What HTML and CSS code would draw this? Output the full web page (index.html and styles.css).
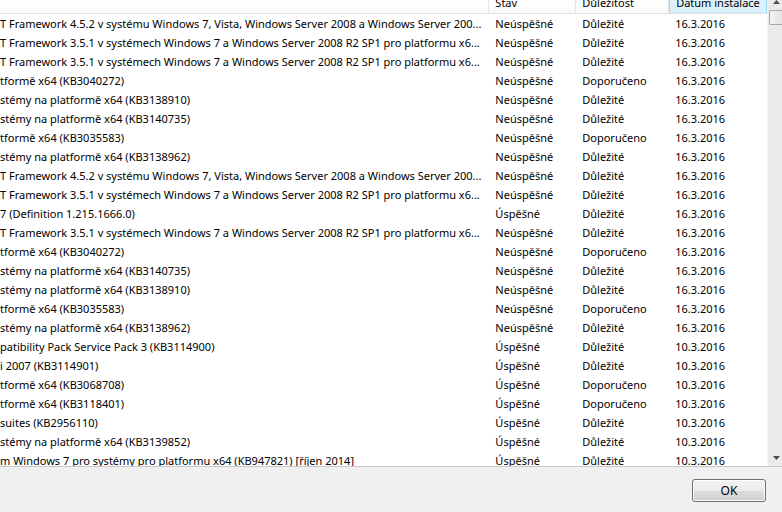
FILE: index.html
```html
<!DOCTYPE html>
<html lang="cs">
<head>
    <meta charset="UTF-8">
    <title>Historie aktualizací</title>
    <link rel="stylesheet" href="styles.css">
</head>
<body>
    <div class="list">
        <div class="view">
            <div class="head">
                <div class="col c-name"></div>
                <div class="col c-stav">Stav</div>
                <div class="col c-dul">Důležitost</div>
                <div class="col c-date sorted">Datum instalace</div>
            </div>
            <div class="rows">
                <div class="row"><span class="c-name">T Framework 4.5.2 v systému Windows 7, Vista, Windows Server 2008 a Windows Server 200...</span><span class="c-stav">Neúspěšné</span><span class="c-dul">Důležité</span><span class="c-date">16.3.2016</span></div>
                <div class="row"><span class="c-name">T Framework 3.5.1 v systémech Windows 7 a Windows Server 2008 R2 SP1 pro platformu x6...</span><span class="c-stav">Neúspěšné</span><span class="c-dul">Důležité</span><span class="c-date">16.3.2016</span></div>
                <div class="row"><span class="c-name">T Framework 3.5.1 v systémech Windows 7 a Windows Server 2008 R2 SP1 pro platformu x6...</span><span class="c-stav">Neúspěšné</span><span class="c-dul">Důležité</span><span class="c-date">16.3.2016</span></div>
                <div class="row"><span class="c-name">tformě x64 (KB3040272)</span><span class="c-stav">Neúspěšné</span><span class="c-dul">Doporučeno</span><span class="c-date">16.3.2016</span></div>
                <div class="row"><span class="c-name">stémy na platformě x64 (KB3138910)</span><span class="c-stav">Neúspěšné</span><span class="c-dul">Důležité</span><span class="c-date">16.3.2016</span></div>
                <div class="row"><span class="c-name">stémy na platformě x64 (KB3140735)</span><span class="c-stav">Neúspěšné</span><span class="c-dul">Důležité</span><span class="c-date">16.3.2016</span></div>
                <div class="row"><span class="c-name">tformě x64 (KB3035583)</span><span class="c-stav">Neúspěšné</span><span class="c-dul">Doporučeno</span><span class="c-date">16.3.2016</span></div>
                <div class="row"><span class="c-name">stémy na platformě x64 (KB3138962)</span><span class="c-stav">Neúspěšné</span><span class="c-dul">Důležité</span><span class="c-date">16.3.2016</span></div>
                <div class="row"><span class="c-name">T Framework 4.5.2 v systému Windows 7, Vista, Windows Server 2008 a Windows Server 200...</span><span class="c-stav">Neúspěšné</span><span class="c-dul">Důležité</span><span class="c-date">16.3.2016</span></div>
                <div class="row"><span class="c-name">T Framework 3.5.1 v systémech Windows 7 a Windows Server 2008 R2 SP1 pro platformu x6...</span><span class="c-stav">Neúspěšné</span><span class="c-dul">Důležité</span><span class="c-date">16.3.2016</span></div>
                <div class="row"><span class="c-name">7 (Definition 1.215.1666.0)</span><span class="c-stav">Úspěšné</span><span class="c-dul">Důležité</span><span class="c-date">16.3.2016</span></div>
                <div class="row"><span class="c-name">T Framework 3.5.1 v systémech Windows 7 a Windows Server 2008 R2 SP1 pro platformu x6...</span><span class="c-stav">Neúspěšné</span><span class="c-dul">Důležité</span><span class="c-date">16.3.2016</span></div>
                <div class="row"><span class="c-name">tformě x64 (KB3040272)</span><span class="c-stav">Neúspěšné</span><span class="c-dul">Doporučeno</span><span class="c-date">16.3.2016</span></div>
                <div class="row"><span class="c-name">stémy na platformě x64 (KB3140735)</span><span class="c-stav">Neúspěšné</span><span class="c-dul">Důležité</span><span class="c-date">16.3.2016</span></div>
                <div class="row"><span class="c-name">stémy na platformě x64 (KB3138910)</span><span class="c-stav">Neúspěšné</span><span class="c-dul">Důležité</span><span class="c-date">16.3.2016</span></div>
                <div class="row"><span class="c-name">tformě x64 (KB3035583)</span><span class="c-stav">Neúspěšné</span><span class="c-dul">Doporučeno</span><span class="c-date">16.3.2016</span></div>
                <div class="row"><span class="c-name">stémy na platformě x64 (KB3138962)</span><span class="c-stav">Neúspěšné</span><span class="c-dul">Důležité</span><span class="c-date">16.3.2016</span></div>
                <div class="row"><span class="c-name">patibility Pack Service Pack 3 (KB3114900)</span><span class="c-stav">Úspěšné</span><span class="c-dul">Důležité</span><span class="c-date">10.3.2016</span></div>
                <div class="row"><span class="c-name">i 2007 (KB3114901)</span><span class="c-stav">Úspěšné</span><span class="c-dul">Důležité</span><span class="c-date">10.3.2016</span></div>
                <div class="row"><span class="c-name">tformě x64 (KB3068708)</span><span class="c-stav">Úspěšné</span><span class="c-dul">Doporučeno</span><span class="c-date">10.3.2016</span></div>
                <div class="row"><span class="c-name">tformě x64 (KB3118401)</span><span class="c-stav">Úspěšné</span><span class="c-dul">Doporučeno</span><span class="c-date">10.3.2016</span></div>
                <div class="row"><span class="c-name">suites (KB2956110)</span><span class="c-stav">Úspěšné</span><span class="c-dul">Důležité</span><span class="c-date">10.3.2016</span></div>
                <div class="row"><span class="c-name">stémy na platformě x64 (KB3139852)</span><span class="c-stav">Úspěšné</span><span class="c-dul">Důležité</span><span class="c-date">10.3.2016</span></div>
                <div class="row"><span class="c-name">m Windows 7 pro systémy pro platformu x64 (KB947821) [říjen 2014]</span><span class="c-stav">Úspěšné</span><span class="c-dul">Důležité</span><span class="c-date">10.3.2016</span></div>
            </div>
        </div>
        <div class="vscroll">
            <div class="arrow up">
                <svg width="7" height="4" viewBox="0 0 7 4"><path d="M0 4 L3.5 0 L7 4 Z" fill="#4d4d4d"/></svg>
            </div>
            <div class="thumb"></div>
            <div class="track"></div>
            <div class="arrow down">
                <svg width="7" height="4" viewBox="0 0 7 4"><path d="M0 0 L7 0 L3.5 4 Z" fill="#4d4d4d"/></svg>
            </div>
        </div>
    </div>

    <div class="footer">
        <button class="ok">OK</button>
    </div>
</body>
</html>
```

FILE: styles.css
```css
html,
body {
    margin: 0;
    padding: 0;
    width: 782px;
    height: 512px;
    overflow: hidden;
    background-color: #f0f0f0;
}

body {
    font-family: "Noto Sans", "Open Sans", sans-serif;
    font-size: 11px;
    color: #000;
}

.list {
    display: flex;
    height: 466px;
    background: white;
    border-bottom: 1px solid #c9c9c9;
    overflow: hidden;
}

.view {
    width: 768px;
    overflow: hidden;
}

.head {
    display: flex;
    height: 21px;
    margin-top: -8px;
    border-bottom: 1px solid #e0e0e0;
    background: linear-gradient(#ffffff, #fbfbfb);
}

.head .col {
    line-height: 21px;
    padding-left: 6px;
    box-sizing: border-box;
    border-right: 1px solid #e5e5e5;
    white-space: nowrap;
}

.head .sorted {
    background: linear-gradient(#e3f3fc, #d9eefb);
    border-left: 1px solid #96d9f9;
    border-right: 1px solid #96d9f9;
}

.head .c-name {
    padding-left: 0;
}

.c-name {
    width: 490px;
}

.c-stav {
    width: 87px;
}

.c-dul {
    width: 93px;
}

.c-date {
    width: 98px;
}

.row {
    display: flex;
    height: 19px;
    line-height: 19px;
    white-space: nowrap;
}

.row span {
    box-sizing: border-box;
    padding-left: 6px;
    overflow: hidden;
    text-overflow: clip;
}

.row .c-name {
    padding-left: 0;
}

.vscroll {
    width: 14px;
    display: flex;
    flex-direction: column;
    background: #eaeaea;
    border-left: 1px solid #f2f2f2;
}

.arrow {
    height: 16px;
    display: flex;
    justify-content: center;
    padding-left: 3px;
}

.arrow.up {
    height: 10px;
    align-items: flex-start;
}

.arrow.down {
    align-items: center;
}

.thumb {
    height: 13px;
    margin-left: 1px;
    border: 1px solid #a7a7a7;
    border-right: none;
    border-radius: 2px 0 0 2px;
    background: linear-gradient(90deg, #f3f3f3, #e2e2e2);
}

.track {
    flex: 1;
}

.footer {
    display: flex;
    justify-content: flex-end;
    padding: 12px 16px 0 0;
}

.ok {
    width: 74px;
    height: 23px;
    font-family: "Noto Sans", "Open Sans", sans-serif;
    font-size: 12px;
    color: #000;
    border: 1px solid #707070;
    border-radius: 3px;
    background: linear-gradient(#f2f2f2 0%, #ebebeb 50%, #dddddd 51%, #cfcfcf 100%);
    box-shadow: inset 0 0 0 1px #fcfcfc;
    padding: 0;
}
```
